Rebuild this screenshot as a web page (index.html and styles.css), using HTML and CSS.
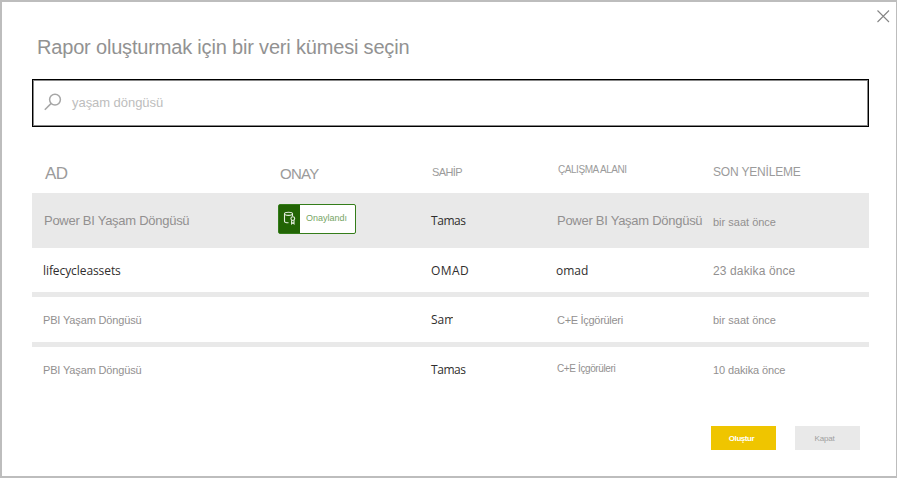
FILE: index.html
```html
<!DOCTYPE html>
<html lang="tr">
<head>
<meta charset="utf-8">
<title>Veri kümesi seçin</title>
<link rel="stylesheet" href="styles.css">
</head>
<body>
<main class="dialog">
  <button class="close" aria-label="Kapat"><svg width="13" height="13" viewBox="0 0 13 13"><path d="M.5 .5 12 12M12 .5 .5 12"/></svg></button>
  <h1><span class="title">Rapor oluşturmak için bir veri kümesi seçin</span></h1>
  <div class="search">
    <svg width="18" height="18" viewBox="0 0 18 18"><circle cx="11" cy="6.6" r="5.4"/><path d="M7.2 10.4 .8 16.8"/></svg>
    <span class="query">yaşam döngüsü</span>
  </div>
  <section class="table">
    <div class="row head">
      <span class="h-name">AD</span><span class="h-endorse">ONAY</span><span class="h-owner">SAHİP</span><span class="h-space">ÇALIŞMA ALANI</span><span class="h-date">SON YENİLEME</span>
    </div>
    <div class="row selected">
      <span class="large">Power BI Yaşam Döngüsü</span>
      <span class="badge"><span class="badge-icon"><svg width="14" height="14" viewBox="0 0 14 14"><ellipse cx="5.5" cy="2.8" rx="4" ry="1.6"/><path d="M1.5 2.8v7.4c0 1 1.6 1.6 4 1.6M9.5 2.8v2.4"/><circle cx="9.8" cy="7.6" r="1.9"/><path d="M8.6 9.3v3.5l1.2-.9 1.2.9V9.3"/></svg></span><span class="badge-text">Onaylandı</span></span>
      <span class="dark tamas">Tamas</span>
      <span class="large space-large">Power BI Yaşam Döngüsü</span>
      <span class="date low">bir saat önce</span>
    </div>
    <div class="row second">
      <span class="dark asset">lifecycleassets</span><span></span><span class="dark omad">OMAD</span><span class="dark">omad</span><span class="date date-wide">23 dakika önce</span>
    </div>
    <div class="row third">
      <span class="small">PBI Yaşam Döngüsü</span><span></span><span class="dark clipped">Sam</span><span class="insight">C+E İçgörüleri</span><span class="date">bir saat önce</span>
    </div>
    <div class="row fourth">
      <span class="small">PBI Yaşam Döngüsü</span><span></span><span class="dark tamas">Tamas</span><span class="insight insight-small">C+E İçgörüleri</span><span class="date date-ten">10 dakika önce</span>
    </div>
  </section>
  <footer>
    <button class="create">Oluştur</button>
    <button class="cancel">Kapat</button>
  </footer>
</main>
</body>
</html>
```

FILE: styles.css
```css
* { box-sizing: border-box; }
body { margin: 0; background: #fff; }
.dialog {
  position: relative;
  width: 897px;
  height: 478px;
  padding: 33px 27px 0 30px;
  border: solid #bdbdbd;
  border-width: 2px 1px 2px 2px;
  font-family: "Liberation Sans", Arial, sans-serif;
  color: #929090;
  overflow: hidden;
}
button { border: 0; padding: 0; font-family: inherit; }
svg { display: block; fill: none; }
.close { position: absolute; top: 8px; right: 6px; background: none; }
.close svg { stroke: #858585; stroke-width: 1.1; }
h1 {
  margin: 0 0 20px 5px;
  height: 24px;
  font-size: 20px;
  line-height: 24px;
  font-weight: 400;
  white-space: nowrap;
  color: #929292;
}
.title { letter-spacing: -.18px; }
.search {
  display: flex;
  align-items: center;
  height: 48px;
  width: 837px;
  border: 1px solid #000;
  box-shadow: inset 0 0 0 1px #888;
  padding-left: 11px;
}
.search svg { stroke: #a6a6a6; stroke-width: 1.5; margin-bottom: 3px; }
.query { margin-left: 10px; font-size: 13px; line-height: 16px; letter-spacing: -.05px; color: #bdbdbd; }
.table { width: 837px; }
.row {
  display: grid;
  grid-template-columns: 246px 153px 125px 156px 157px;
  align-items: center;
  line-height: 16px;
  white-space: nowrap;
}
.row > * { justify-self: start; }
.head { height: 66px; padding-top: 26px; align-items: start; color: #9b9b9b; }
.h-name { margin: 13px 0 0 13px; font-size: 17px; letter-spacing: -.7px; }
.h-endorse { margin: 13px 0 0 2px; font-size: 15px; letter-spacing: -.7px; }
.h-owner { margin: 11px 0 0 1px; font-size: 11px; letter-spacing: -.6px; }
.h-space { margin: 9px 0 0 2px; font-size: 10px; letter-spacing: -.45px; }
.h-date { margin: 11px 0 0 1px; font-size: 12px; letter-spacing: -.18px; }
.selected { height: 55px; background: #e9e9e9; }
.second { height: 49px; border-bottom: 5px solid #e9e9e9; }
.third { height: 50px; border-bottom: 5px solid #e9e9e9; }
.fourth { height: 45px; }
.large { margin-left: 12px; font-size: 13px; letter-spacing: -.27px; }
.space-large { margin-left: 1px; }
.small { margin-left: 11px; font-size: 11px; letter-spacing: -.15px; }
.dark { font-family: "Open Sans", sans-serif; font-size: 12px; color: #302e2e; }
.tamas { letter-spacing: -.45px; }
.asset { margin-left: 11px; letter-spacing: -.08px; }
.omad { letter-spacing: .45px; }
.second .date, .second .dark { margin-top: 1px; }
.clipped { clip-path: inset(0 2.5px 0 0); }
.insight { font-size: 11px; margin-left: 1px; letter-spacing: -.3px; }
.insight-small { font-size: 10px; letter-spacing: -.38px; margin-bottom: 2px; }
.date { font-size: 11px; margin-left: 1px; }
.date-wide { font-size: 12px; letter-spacing: .12px; }
.date-ten { letter-spacing: -.12px; }
.low { margin-top: 3px; }
.badge {
  display: flex;
  width: 78px;
  height: 30px;
  margin-top: -4px;
  border: 1px solid #347d1a;
  border-radius: 2px;
  background: #fff;
}
.badge-icon { width: 21px; background: #226405; padding: 6px 0 0 4px; }
.badge-icon svg { stroke: #e4eddf; stroke-width: 1.1; }
.badge-text { padding: 5px 0 0 6px; font-size: 9px; color: #77a565; }
footer { display: flex; gap: 19px; margin: 34px 0 0 679px; }
footer button { width: 65px; height: 24px; font-size: 8px; }
.create { background: #efc500; color: #fff; padding-right: 4px; font-weight: 700; letter-spacing: -.45px; }
.cancel { background: #e9e9e9; color: #a0a0a0; padding-right: 6px; letter-spacing: -.2px; }
```
